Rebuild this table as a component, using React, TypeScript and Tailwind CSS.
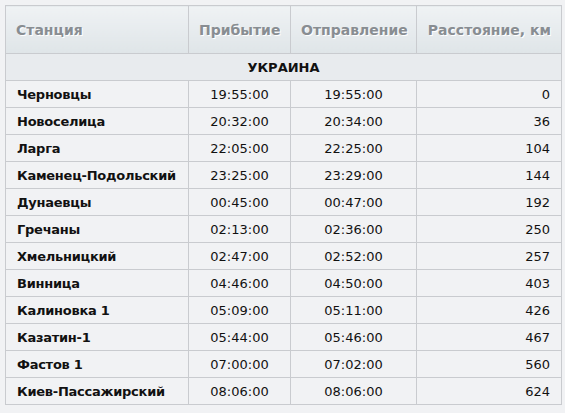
import React from 'react';

interface Stop {
  name: string;
  arrival: string;
  departure: string;
  distance: number;
}

const stops: Stop[] = [
  { name: 'Черновцы', arrival: '19:55:00', departure: '19:55:00', distance: 0 },
  { name: 'Новоселица', arrival: '20:32:00', departure: '20:34:00', distance: 36 },
  { name: 'Ларга', arrival: '22:05:00', departure: '22:25:00', distance: 104 },
  { name: 'Каменец-Подольский', arrival: '23:25:00', departure: '23:29:00', distance: 144 },
  { name: 'Дунаевцы', arrival: '00:45:00', departure: '00:47:00', distance: 192 },
  { name: 'Гречаны', arrival: '02:13:00', departure: '02:36:00', distance: 250 },
  { name: 'Хмельницкий', arrival: '02:47:00', departure: '02:52:00', distance: 257 },
  { name: 'Винница', arrival: '04:46:00', departure: '04:50:00', distance: 403 },
  { name: 'Калиновка 1', arrival: '05:09:00', departure: '05:11:00', distance: 426 },
  { name: 'Казатин-1', arrival: '05:44:00', departure: '05:46:00', distance: 467 },
  { name: 'Фастов 1', arrival: '07:00:00', departure: '07:02:00', distance: 560 },
  { name: 'Киев-Пассажирский', arrival: '08:06:00', departure: '08:06:00', distance: 624 },
];

const th =
  'h-[48px] border border-[#c9cbcf] px-[10px] pt-[1px] text-[14px] font-bold text-[#888d92] [text-shadow:1px_1px_0_#ffffff] bg-gradient-to-b from-[#eff2f4] to-[#dfe5e8] whitespace-nowrap';
const td = 'h-[27px] border border-[#c9cbcf] px-[11px] pt-[1px] pb-0 whitespace-nowrap';

const App: React.FC = () => {
  return (
    <div className="min-h-[413px] bg-[#f1f2f4] p-[5px] font-['DejaVu_Sans',Verdana,sans-serif] text-[13px] text-[#111]">
      <table className="w-[556px] table-fixed border-collapse">
        <colgroup>
          <col className="w-[183px]" />
          <col className="w-[102px]" />
          <col className="w-[126px]" />
          <col className="w-[145px]" />
        </colgroup>
        <thead>
          <tr>
            <th className={`${th} text-left`}>Станция</th>
            <th className={`${th} text-center`}>Прибытие</th>
            <th className={`${th} text-center`}>Отправление</th>
            <th className={`${th} text-right`}>Расстояние, км</th>
          </tr>
        </thead>
        <tbody>
          <tr>
            <td colSpan={4} className={`${td} bg-[#e8ebee] text-center font-bold`}>
              УКРАИНА
            </td>
          </tr>
          {stops.map((s) => (
            <tr key={s.name} className="bg-[#f1f2f4]">
              <td className={`${td} text-left font-bold tracking-[-0.25px]`}>{s.name}</td>
              <td className={`${td} text-center`}>{s.arrival}</td>
              <td className={`${td} text-center`}>{s.departure}</td>
              <td className={`${td} text-right`}>{s.distance}</td>
            </tr>
          ))}
        </tbody>
      </table>
    </div>
  );
};

export default App;
